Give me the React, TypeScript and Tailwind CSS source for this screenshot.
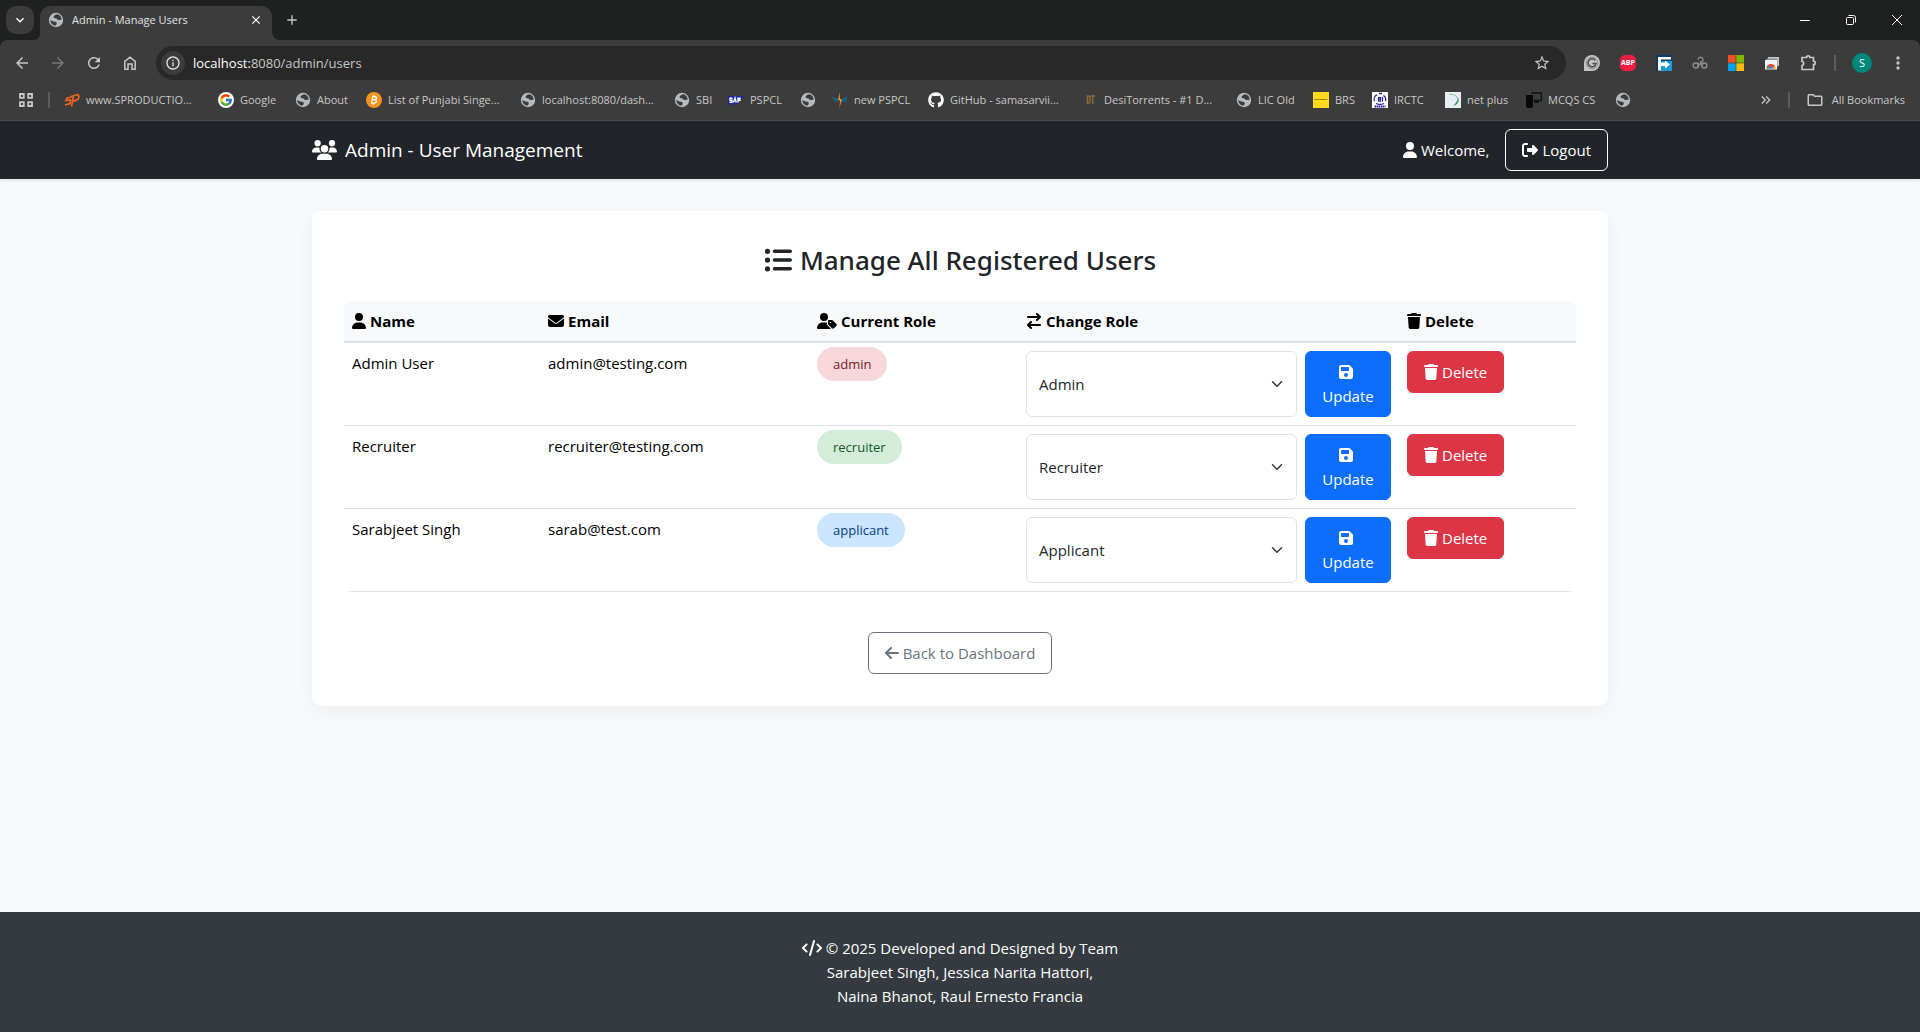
import type { ReactNode } from "react";
import {
  FaArrowLeft,
  FaArrowRightArrowLeft,
  FaCode,
  FaEnvelope,
  FaFloppyDisk,
  FaGithub,
  FaListUl,
  FaRightFromBracket,
  FaTrash,
  FaUser,
  FaUserTag,
  FaUsers,
} from "react-icons/fa6";
import {
  MdAdd,
  MdArrowBack,
  MdArrowForward,
  MdClose,
  MdKeyboardArrowDown,
  MdKeyboardDoubleArrowRight,
  MdMoreVert,
  MdOutlineFolder,
  MdOutlineInfo,
  MdRefresh,
  MdStarBorder,
} from "react-icons/md";
import { FcGoogle } from "react-icons/fc";

function Globe() {
  return (
    <svg viewBox="0 0 16 16" className="size-4">
      <circle cx="8" cy="8" r="7.2" fill="#b6babf" />
      <path
        d="M9.500 2.300C7.800 2.300 7 3.300 5.800 4.200 5.200 5 5.800 6.100 6.800 6.300c1 .2 1.700 0 2.100.8.400.9 1.200 1.200 2 .9 1.200-.4 2.200-.4 2.800-.2 0-2.400-1.700-4.900-4.200-5.500z"
        fill="#3c3c3c"
      />
      <path
        d="M2.200 7.800c-.1 2.900 2.200 5.700 5.300 6 .1-.9 1.300-1.200 1.300-2.400 0-1-.8-1.500-1.800-1.600C5.300 9.600 3.800 9.200 2.200 7.800z"
        fill="#3c3c3c"
      />
    </svg>
  );
}

function SpIcon() {
  return (
    <svg viewBox="0 0 16 16" className="size-4" fill="none" stroke="#f0641e" strokeWidth="1.700">
      <path d="M7.500 5L3 6 2 8.500l4.500-.5-.5 3.500L1 13" />
      <path d="M7.500 14.500L9.500 4M7 4.500L14 2.500l1 2-1 2.800L9.500 9.500" />
    </svg>
  );
}

function GoogleIcon() {
  return (
    <span className="flex size-4 items-center justify-center rounded-full bg-white">
      <FcGoogle className="size-3.5" />
    </span>
  );
}

function BitcoinIcon() {
  return (
    <svg viewBox="0 0 16 16" className="size-4">
      <circle cx="8" cy="8" r="8" fill="#f7931a" />
      <path
        d="M6.800 4.500 5.500 11.500M6.300 4.500h2.700c2.200.2 1.900 3-.2 3.200H6.300h2.500c2.400.2 1.900 3.400-.6 3.400H5.200M8 3v1.500M7.200 11.500V13"
        fill="none"
        stroke="#fff"
        strokeWidth="1.300"
      />
    </svg>
  );
}

function SapIcon() {
  return (
    <svg viewBox="0 0 16 16" className="size-4">
      <path d="M0 4h16l-7 8.500H0z" fill="#1a2a9c" />
      <path
        d="M4.500 6.200H2v2h2v2H1.500M5.500 10.500l1.500-4.500 1.300 4.500M10 10.500V6.200h2v2h-2"
        stroke="#fff"
        strokeWidth="1.400"
        fill="none"
      />
    </svg>
  );
}

function BoltIcon() {
  return (
    <svg viewBox="0 0 16 16" className="size-4">
      <path d="M0 5l5 1 3 2 5-3 3 1-2 4H9L7 9 3 10z" fill="#1b6078" />
      <path d="M8 0L6 8h2l-.5 8L10 7H8z" fill="#f08a24" />
    </svg>
  );
}

function DtIcon() {
  return (
    <svg viewBox="0 0 16 16" className="size-4" fill="none" stroke="#8a6a3c" strokeWidth="1.500">
      <path d="M5.500 4v7M4.500 4h2.500l1 1v5l-1 1H4.500M8.500 4H13M10.800 4v8" />
    </svg>
  );
}

function BrsIcon() {
  return (
    <svg viewBox="0 0 16 16" className="size-4">
      <path d="M0 0h16v16H0z" fill="#ffd91a" />
      <path d="M1.500 7.500h13" stroke="#8a7412" strokeDasharray="2 .5" />
    </svg>
  );
}

function IrctcIcon() {
  return (
    <svg viewBox="0 0 16 16" className="size-4" fill="none" stroke="#23239a">
      <path d="M0 0h16v16H0z" fill="#fff" stroke="none" />
      <path d="M5 2.800a5 5 0 0 0-2.500 6.500M11.500 3.500a5 5 0 0 1 2 5.500M7 1.500h3M4 11.500q4 1.800 8 0" strokeWidth="1.300" />
      <path d="M6.500 5v4.500M6.500 5.500h2v1.700h-2 2v2h-2M10.500 5v4.500" strokeWidth="1.200" />
      <path d="M2.500 14.500h11" strokeWidth="2" strokeDasharray="1.500 .5" />
    </svg>
  );
}

function NetPlusIcon() {
  return (
    <svg viewBox="0 0 16 16" className="size-4" fill="none">
      <path d="M0 0h16v16H0z" fill="#e8eff2" />
      <path d="M4 2.500c5-.5 8 1 9 5" stroke="#8fb8c4" />
      <path d="M13.500 5.500c1 4-1 7.500-5.500 8.500 2.500-2 4.500-5 5.500-8.500z" fill="#3c8a64" />
    </svg>
  );
}

function McqsIcon() {
  return (
    <svg viewBox="0 0 16 16" className="size-4">
      <path d="M5.500 1h10v7.500h-8" fill="none" stroke="#111" strokeWidth="1.300" />
      <path d="M9 9h3l1 2H8z" fill="#111" />
      <path d="M0 3h7v11l-1 2H1l-1-2z" fill="#080808" />
    </svg>
  );
}

const bookmarks: { label?: string; icon: ReactNode; width: string }[] = [
  { label: "www.SPRODUCTIO...", width: "w-[154px]", icon: <SpIcon /> },
  { label: "Google", width: "w-[77px]", icon: <GoogleIcon /> },
  { label: "About", width: "w-[71px]", icon: <Globe /> },
  { label: "List of Punjabi Singe...", width: "w-[154px]", icon: <BitcoinIcon /> },
  { label: "localhost:8080/dash...", width: "w-[154px]", icon: <Globe /> },
  { label: "SBI", width: "w-[54px]", icon: <Globe /> },
  { label: "PSPCL", width: "w-[72px]", icon: <SapIcon /> },
  { width: "w-8", icon: <Globe /> },
  { label: "new PSPCL", width: "w-[96px]", icon: <BoltIcon /> },
  { label: "GitHub - samasarvii...", width: "w-[154px]", icon: <FaGithub className="size-4 text-white" /> },
  { label: "DesiTorrents - #1 D...", width: "w-[154px]", icon: <DtIcon /> },
  { label: "LIC Old", width: "w-[77px]", icon: <Globe /> },
  { label: "BRS", width: "w-[59px]", icon: <BrsIcon /> },
  { label: "IRCTC", width: "w-[73px]", icon: <IrctcIcon /> },
  { label: "net plus", width: "w-[81px]", icon: <NetPlusIcon /> },
  { label: "MCQS CS", width: "w-[89px]", icon: <McqsIcon /> },
  { width: "w-8", icon: <Globe /> },
];

const extensions: { name: string; icon: ReactNode }[] = [
  {
    name: "Grammar checker",
    icon: (
      <svg viewBox="0 0 16 16" className="size-4">
        <path d="M0 8a8 8 0 1 1 8 8H0z" fill="#c4c4c4" />
        <circle cx="8" cy="8" r="5.800" fill="#c4c4c4" stroke="#6a6a6a" strokeWidth=".6" />
        <path d="M11.300 5.500A4 4 0 1 0 12 8.500H8.500" fill="none" stroke="#4a4a4a" strokeWidth="1.500" />
      </svg>
    ),
  },
  {
    name: "Ad blocker",
    icon: (
      <span className="flex size-4 items-center justify-center rounded-[5px] bg-[#ee1c40] text-[7px] font-bold text-white">
        ABP
      </span>
    ),
  },
  {
    name: "Redirect",
    icon: (
      <svg viewBox="0 0 16 16" className="size-4">
        <path d="M0 0h16v16H0z" fill="#0b3a66" />
        <path d="M5 6h11v10H5z" fill="#1b9ad6" />
        <path d="M2 2h13v2.500H5v3h4V5.500l5 4-5 4V11H5v4.500H2z" fill="#fff" />
      </svg>
    ),
  },
  {
    name: "Links",
    icon: (
      <svg viewBox="0 0 16 16" className="size-4" fill="none" stroke="#8a8d90" strokeWidth="1.400">
        <circle cx="3.700" cy="10.500" r="2.500" />
        <path d="M5.500 12.300l5-6a2.500 2.500 0 1 0-4.500-1.500" />
        <path d="M8 6.500l3 4M6 8l1 1.500" />
        <circle cx="12.300" cy="10.500" r="2.500" />
      </svg>
    ),
  },
  {
    name: "Microsoft",
    icon: (
      <svg viewBox="0 0 16 16" className="size-4">
        <path d="M0 0h7.700v7.700H0z" fill="#f25022" />
        <path d="M8.300 0H16v7.700H8.300z" fill="#7fba00" />
        <path d="M0 8.300h7.700V16H0z" fill="#00a4ef" />
        <path d="M8.300 8.300H16V16H8.300z" fill="#ffb900" />
      </svg>
    ),
  },
  {
    name: "Gallery",
    icon: (
      <svg viewBox="0 0 16 16" className="size-4">
        <path d="M4 2h11v9H4z" fill="#c4c7c9" />
        <path d="M2.500 3.500h11v9h-11z" fill="#8d9196" />
        <path d="M1 5h12v9.500H1z" fill="#f1f3f4" />
        <path d="M2.500 13.500a4.500 4.500 0 0 1 9 0z" fill="#ea4335" />
        <path d="M2.500 13.500a4.500 4.500 0 0 1 1.200-3l2 3z" fill="#34a853" />
        <path d="M11.500 13.500a4.500 4.500 0 0 0-.8-2.500l-2.500 2.500z" fill="#fbbc04" />
        <path d="M4.800 13.500a2.200 2.200 0 0 1 4.400 0z" fill="#4285f4" />
      </svg>
    ),
  },
  {
    name: "Extensions",
    icon: (
      <svg viewBox="0 0 18 18" className="size-[18px]" fill="none" stroke="#c7c7c7" strokeWidth="1.700">
        <path d="M3 3.500h4.500a1.700 1.700 0 0 1 3.400 0h3.600v3.700a1.700 1.700 0 0 1 0 3.400v4.900H3v-3.800a2.200 2.200 0 0 0 0-4.300z" />
      </svg>
    ),
  },
];

function ChromeButton({ label, children }: { label: string; children: ReactNode }) {
  return (
    <button type="button" aria-label={label} className="flex size-9 items-center justify-center">
      {children}
    </button>
  );
}

function BrowserChrome() {
  return (
    <div className='bg-[#1f2020] font-["Open_Sans","Noto_Sans",sans-serif] text-[#c7c7c7]'>
      <div className="flex h-10 items-start justify-between">
        <div className="flex items-start pt-1.5 pl-1.5">
          <button
            type="button"
            aria-label="Search tabs"
            className="flex size-7 items-center justify-center rounded-[10px] bg-[#3c3c3c] text-white"
          >
            <MdKeyboardArrowDown className="size-4" />
          </button>
          <div className="flex h-[34px] items-end">
            <span className="h-2 w-1.5 overflow-hidden bg-[#3c3c3c]">
              <span className="block h-full rounded-br-lg bg-[#1f2020]" />
            </span>
            <div className="flex h-full w-[232px] items-center rounded-t-[10px] bg-[#3c3c3c] px-2 pb-1.5">
              <Globe />
              <span className="ml-2 flex-1 text-[11px] text-[#e3e3e3]">Admin - Manage Users</span>
              <button type="button" aria-label="Close tab" className="flex size-4 items-center justify-center text-white">
                <MdClose className="size-3.5" />
              </button>
            </div>
            <span className="h-2 w-2 overflow-hidden bg-[#3c3c3c]">
              <span className="block h-full rounded-bl-lg bg-[#1f2020]" />
            </span>
          </div>
          <button type="button" aria-label="New tab" className="flex h-7 w-6 items-center justify-center">
            <MdAdd className="size-4" />
          </button>
        </div>
        <div className="flex h-10 items-center text-white">
          <button type="button" aria-label="Minimize" className="flex w-[46px] justify-center">
            <span className="h-px w-2.5 bg-white" />
          </button>
          <button type="button" aria-label="Restore" className="flex w-[46px] justify-center">
            <svg viewBox="0 0 10 10" className="size-2.5" fill="none" stroke="currentColor">
              <rect x=".5" y="2.500" width="7" height="7" rx="1" />
              <path d="M2.500.5h5a2 2 0 0 1 2 2v5" />
            </svg>
          </button>
          <button type="button" aria-label="Close" className="flex w-[46px] justify-center">
            <svg viewBox="0 0 10 10" className="size-2.5" fill="none" stroke="currentColor">
              <path d="M0 0l10 10M10 0L0 10" />
            </svg>
          </button>
        </div>
      </div>

      <div className="rounded-t-lg border-b border-[#4a4d50] bg-[#3c3c3c]">
        <div className="flex h-[46px] items-center px-1">
          <ChromeButton label="Back">
            <MdArrowBack className="size-[18px]" />
          </ChromeButton>
          <ChromeButton label="Forward">
            <MdArrowForward className="size-[18px] text-[#757575]" />
          </ChromeButton>
          <ChromeButton label="Reload">
            <MdRefresh className="size-[18px]" />
          </ChromeButton>
          <ChromeButton label="Home">
            <svg viewBox="0 0 16 16" className="size-4" fill="none" stroke="currentColor" strokeWidth="1.500">
              <path d="M2.800 6.300L8 2.200l5.200 4.100v7.900H10V9H6v5.200H2.800z" />
            </svg>
          </ChromeButton>
          <div className="ml-2 flex h-[34px] flex-1 items-center rounded-full bg-[#282828] pr-[15px] pl-[5px]">
            <button
              type="button"
              aria-label="Site information"
              className="flex size-6 items-center justify-center rounded-full bg-[#3c3c3c] text-[#e3e3e3]"
            >
              <MdOutlineInfo className="size-4" />
            </button>
            <div className="ml-2 flex-1 text-[13px]">
              <span className="text-white">localhost:</span>8080/admin/users
            </div>
            <MdStarBorder className="size-[18px]" />
          </div>
          <div className="ml-2 flex items-center">
            {extensions.map((extension) => (
              <ChromeButton key={extension.name} label={extension.name}>
                {extension.icon}
              </ChromeButton>
            ))}
            <span className="mx-2 h-4 w-0.5 bg-[#5c5c5c]" />
            <ChromeButton label="Profile">
              <span className="flex size-5 items-center justify-center rounded-full bg-[#00897b] text-[11px] text-white">
                S
              </span>
            </ChromeButton>
            <ChromeButton label="Menu">
              <MdMoreVert className="size-5" />
            </ChromeButton>
          </div>
        </div>

        <div className="flex h-[34px] items-center pb-1.5 pl-[18px] text-[11px]">
          <button type="button" aria-label="Apps">
            <svg viewBox="0 0 16 16" className="size-4" fill="none" stroke="currentColor" strokeWidth="1.800">
              <path d="M2 2h3.800v3.800H2zM10.200 2H14v3.800h-3.800zM2 10.200h3.800V14H2zM10.200 10.200H14V14h-3.800z" />
            </svg>
          </button>
          <span className="mr-3.5 ml-3.5 h-4 w-0.5 bg-[#5c5c5c]" />
          <nav className="flex flex-1 overflow-hidden" aria-label="Bookmarks">
            {bookmarks.map((bookmark, index) => (
              <a
                key={index}
                href="#"
                aria-label={bookmark.label ?? "Bookmark"}
                className={`flex shrink-0 items-center gap-1.5 whitespace-nowrap ${bookmark.width}`}
              >
                <span className="shrink-0">{bookmark.icon}</span>
                {bookmark.label}
              </a>
            ))}
          </nav>
          <button type="button" aria-label="More bookmarks">
            <MdKeyboardDoubleArrowRight className="size-4" />
          </button>
          <span className="mr-4 ml-3.5 h-4 w-0.5 bg-[#5c5c5c]" />
          <a href="#" className="flex items-center gap-2 pr-[15px]">
            <MdOutlineFolder className="size-[18px]" />
            All Bookmarks
          </a>
        </div>
      </div>
    </div>
  );
}

const users = [
  { name: "Admin User", email: "admin@testing.com", role: "admin", badge: "bg-[#f8d7da] text-[#721c24]" },
  { name: "Recruiter", email: "recruiter@testing.com", role: "recruiter", badge: "bg-[#d4edda] text-[#155724]" },
  { name: "Sarabjeet Singh", email: "sarab@test.com", role: "applicant", badge: "bg-[#cce5ff] text-[#004085]" },
];

const columns = [
  { label: "Name", width: "w-[196px]", icon: <FaUser className="h-4 w-3.5" /> },
  { label: "Email", width: "w-[269px]", icon: <FaEnvelope className="size-4" /> },
  { label: "Current Role", width: "w-[209px]", icon: <FaUserTag className="h-4 w-5" /> },
  { label: "Change Role", width: "w-[381px]", icon: <FaArrowRightArrowLeft className="size-4" /> },
  { label: "Delete", width: "w-[177px]", icon: <FaTrash className="h-4 w-3.5" /> },
];

function UsersTable() {
  return (
    <div className="overflow-hidden rounded-lg">
      <table className="w-full table-fixed border-collapse text-left text-black">
        <thead className="bg-[#f8f9fa]">
          <tr className="border-b-2 border-[#dee2e6]">
            {columns.map((column) => (
              <th key={column.label} scope="col" className={`p-2 font-bold ${column.width}`}>
                <span className="flex items-center gap-1">
                  {column.icon}
                  {column.label}
                </span>
              </th>
            ))}
          </tr>
        </thead>
        <tbody>
          {users.map((user) => (
            <tr key={user.email} className="border-b border-[#dee2e6] align-top">
              <td className="p-2">{user.name}</td>
              <td className="p-2">{user.email}</td>
              <td className="p-2">
                <span className={`rounded-full px-4 py-2 text-[13px] ${user.badge}`}>{user.role}</span>
              </td>
              <td className="p-2">
                <form className="flex gap-2" onSubmit={(event) => event.preventDefault()}>
                  <div className="relative flex-1">
                    <select
                      aria-label={`Role for ${user.name}`}
                      defaultValue={user.role}
                      className="h-full w-full appearance-none rounded-md border border-[#dee2e6] bg-white px-3 text-[#212529]"
                    >
                      <option value="admin">Admin</option>
                      <option value="recruiter">Recruiter</option>
                      <option value="applicant">Applicant</option>
                    </select>
                    <svg
                      viewBox="0 0 16 16"
                      className="pointer-events-none absolute top-1/2 right-3.5 size-3 -translate-y-1/2"
                      fill="none"
                      stroke="#343a40"
                      strokeWidth="2"
                      strokeLinecap="round"
                      strokeLinejoin="round"
                    >
                      <path d="m2 5 6 6 6-6" />
                    </svg>
                  </div>
                  <button
                    type="submit"
                    className="flex w-[86px] flex-col items-center rounded-md border border-[#0d6efd] bg-[#0d6efd] px-4 py-2 text-white"
                  >
                    <span className="flex h-6 items-center pr-1">
                      <FaFloppyDisk className="size-4" />
                    </span>
                    Update
                  </button>
                </form>
              </td>
              <td className="p-2">
                <button
                  type="button"
                  className="flex items-center gap-1 rounded-md border border-[#dc3545] bg-[#dc3545] px-4 py-2 text-white"
                >
                  <FaTrash className="h-4 w-3.5" />
                  Delete
                </button>
              </td>
            </tr>
          ))}
        </tbody>
      </table>
    </div>
  );
}

export default function App() {
  return (
    <div className='flex min-h-screen flex-col bg-[#f8f9fa] font-["Open_Sans","Noto_Sans",sans-serif] text-[15px] leading-6'>
      <BrowserChrome />
      <header className="relative bg-[#212529] py-2 text-white shadow-[0_2px_4px_rgba(0,0,0,0.08)]">
        <div className="mx-auto flex w-full max-w-[1320px] items-center justify-between px-3">
          <a href="#" className="flex items-center gap-2 text-[19px]">
            <FaUsers className="h-5 w-[25px]" />
            Admin - User Management
          </a>
          <div className="flex items-center gap-4">
            <span className="flex items-center gap-1">
              <FaUser className="h-4 w-3.5" />
              Welcome,
            </span>
            <button type="button" className="flex items-center gap-1 rounded-md border border-white px-4 py-2">
              <FaRightFromBracket className="size-4" />
              Logout
            </button>
          </div>
        </div>
      </header>

      <main className="mx-auto w-full max-w-[1320px] flex-1 px-3 pt-8">
        <section className="rounded-[10px] bg-white p-8 shadow-[0_4px_20px_rgba(0,0,0,0.05)]">
          <h1 className='mb-6 flex items-center justify-center gap-2 font-["Noto_Sans",sans-serif] text-[26px] leading-[34px] font-medium text-[#212529]'>
            <FaListUl className="size-7" />
            Manage All Registered Users
          </h1>
          <UsersTable />
          <div className="mt-10 flex justify-center">
            <a href="#" className="flex items-center gap-1 rounded-md border border-[#6c757d] px-4 py-2 text-[#6c757d]">
              <FaArrowLeft className="h-4 w-3.5" />
              Back to Dashboard
            </a>
          </div>
        </section>
      </main>

      <footer className="bg-[#343a40] py-6 text-center text-white">
        <p className="flex items-center justify-center gap-1">
          <FaCode className="h-4 w-5" />
          © 2025 Developed and Designed by Team
        </p>
        <p>Sarabjeet Singh, Jessica Narita Hattori,</p>
        <p>Naina Bhanot, Raul Ernesto Francia</p>
      </footer>
    </div>
  );
}
